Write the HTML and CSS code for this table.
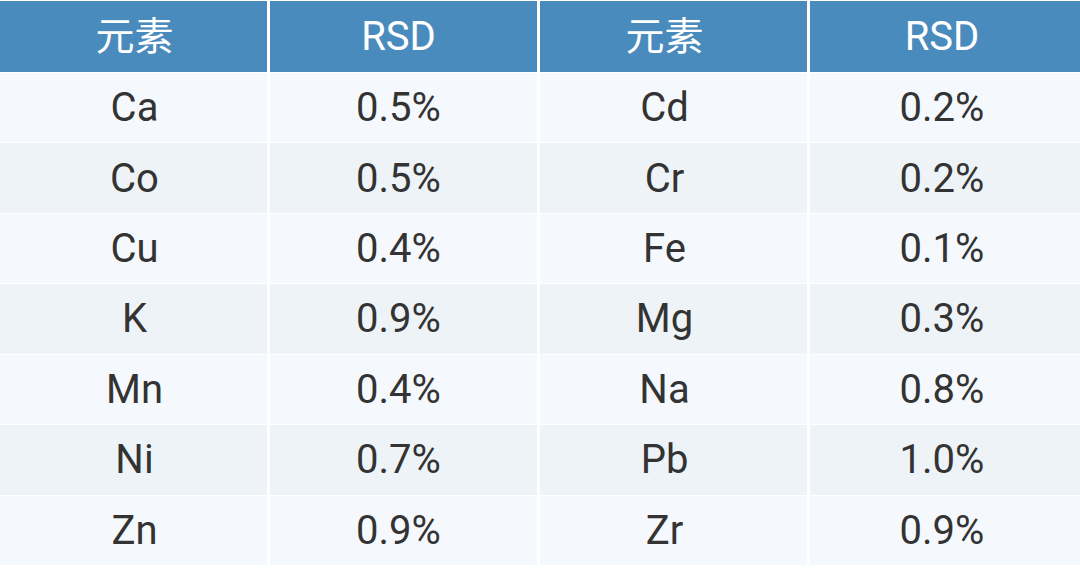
FILE: index.html
```html
<!DOCTYPE html>
<html lang="zh">
<head>
<meta charset="utf-8">
<link rel="stylesheet" href="styles.css">
</head>
<body>
<div class="table">
  <div class="cell c1 head cjk">元素</div><div class="cell c2 head">RSD</div><div class="cell c3 head cjk">元素</div><div class="cell c4 head">RSD</div>
  <div class="cell c1 odd">Ca</div><div class="cell c2 odd">0.5%</div><div class="cell c3 odd">Cd</div><div class="cell c4 odd">0.2%</div>
  <div class="cell c1 even">Co</div><div class="cell c2 even">0.5%</div><div class="cell c3 even">Cr</div><div class="cell c4 even">0.2%</div>
  <div class="cell c1 odd">Cu</div><div class="cell c2 odd">0.4%</div><div class="cell c3 odd">Fe</div><div class="cell c4 odd">0.1%</div>
  <div class="cell c1 even">K</div><div class="cell c2 even">0.9%</div><div class="cell c3 even">Mg</div><div class="cell c4 even">0.3%</div>
  <div class="cell c1 odd">Mn</div><div class="cell c2 odd">0.4%</div><div class="cell c3 odd">Na</div><div class="cell c4 odd">0.8%</div>
  <div class="cell c1 even">Ni</div><div class="cell c2 even">0.7%</div><div class="cell c3 even">Pb</div><div class="cell c4 even">1.0%</div>
  <div class="cell c1 odd">Zn</div><div class="cell c2 odd">0.9%</div><div class="cell c3 odd">Zr</div><div class="cell c4 odd">0.9%</div>
</div>
</body>
</html>
```
FILE: styles.css
```css
html, body {
  margin: 0;
  padding: 0;
  background: #ffffff;
}
body {
  width: 1080px;
  height: 568px;
  overflow: hidden;
  font-family: Roboto, "Noto Sans CJK SC", sans-serif;
}
.table {
  display: grid;
  grid-template-columns: 267px 267px 267px 1fr;
  grid-template-rows: 71px repeat(7, 69.43px);
  column-gap: 3px;
  row-gap: 1px;
  padding-top: 1px;
}
.cell {
  display: flex;
  align-items: center;
  justify-content: center;
  box-sizing: border-box;
  font-size: 40px;
  color: #333333;
}
.c1 { padding-left: 2px; }
.c2 { padding-right: 10px; }
.c3 { padding-right: 18px; }
.c4 { padding-right: 6px; }
.head {
  background: #4a8bbe;
  color: #ffffff;
}
.cjk {
  font-family: "Noto Sans CJK SC", sans-serif;
  font-size: 39px;
  padding-bottom: 8px;
}
.odd {
  background: #f5f9fd;
}
.even {
  background: #eef3f8;
}
```
